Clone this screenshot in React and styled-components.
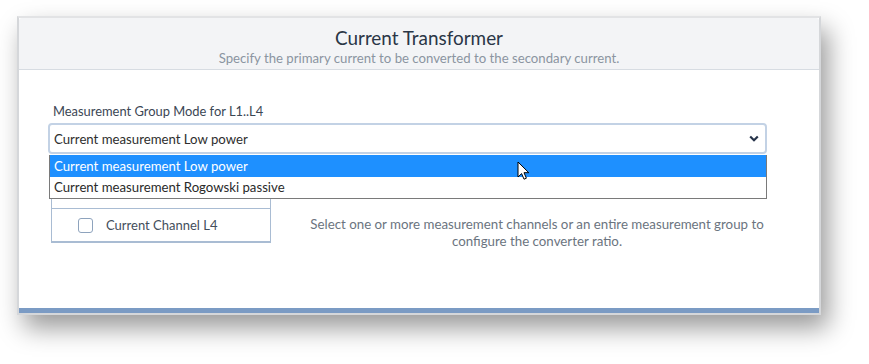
import React from "react";
import styled, { createGlobalStyle } from "styled-components";

const Global = createGlobalStyle`
  html, body { margin: 0; padding: 0; background: #ffffff; }
  body { font-family: "Lato", "Open Sans", sans-serif; }
`;

const Page = styled.div`
  position: relative;
  width: 869px;
  height: 364px;
  overflow: hidden;
  padding: 16px 0 0 17px;
  box-sizing: border-box;
`;

const Frame = styled.div`
  width: 800px;
  border: 2px solid #d5d7da;
  border-top-color: #e2e3e5;
  box-shadow: 7px 13px 24px rgba(0, 0, 0, 0.4);
`;

const Card = styled.div`
  background: #ffffff;
  display: flex;
  flex-direction: column;
`;

const Header = styled.div`
  background: #f3f4f6;
  border-bottom: 1px solid #d7dce2;
  padding: 8px 0 3px;
  text-align: center;
  border-radius: 3px 3px 0 0;
`;

const Title = styled.div`
  font-size: 18.9px;
  line-height: 24px;
  color: #2a3646;
`;

const Subtitle = styled.div`
  font-size: 13.2px;
  line-height: 16px;
  color: #8b95a1;
`;

const Body = styled.div`
  padding: 33px 52px 58px 29px;
`;

const Label = styled.div`
  font-size: 12.9px;
  line-height: 16px;
  color: #3b4654;
  padding-left: 5px;
  margin-bottom: 4px;
`;

const SelectWrap = styled.div`
  position: relative;
`;

const SelectBox = styled.div`
  height: 31px;
  box-sizing: border-box;
  border: 2px solid #c3d2e5;
  border-radius: 4px;
  display: flex;
  align-items: center;
  justify-content: space-between;
  padding: 0 6px 0 4px;
  font-size: 13.2px;
  color: #2e2e2e;
`;

const DropList = styled.div`
  position: absolute;
  top: calc(100% + 1px);
  left: 1px;
  right: 0;
  border: 1px solid #7a7a7a;
  border-top: none;
  background: #ffffff;
  z-index: 5;
`;

const Option = styled.div`
  height: ${(p) => (p.$active ? "22px" : "21px")};
  line-height: ${(p) => (p.$active ? "22px" : "21px")};
  padding-left: 4px;
  font-size: 13.2px;
  background: ${(p) => (p.$active ? "#1e90ff" : "#ffffff")};
  color: ${(p) => (p.$active ? "#ffffff" : "#2a2a2a")};
`;

const Row = styled.div`
  display: grid;
  grid-template-columns: 220px 1fr;
  column-gap: 36px;
  align-items: start;
  margin-top: 20px;
  padding-left: 3px;
`;

const ChannelList = styled.div`
  border: 1px solid #a9bcd3;
  border-bottom-width: 2px;
  padding-top: 33px;
`;

const Channel = styled.div`
  height: 33px;
  box-sizing: border-box;
  display: flex;
  align-items: center;
  padding-left: 26px;
  gap: 13px;
  font-size: 13px;
  color: #434e5b;
  border-top: 1px solid #a9bcd3;
`;

const Check = styled.span`
  width: 15px;
  height: 15px;
  box-sizing: border-box;
  border: 1.5px solid #8ea3bd;
  border-radius: 3px;
  background: #fff;
  flex: none;
`;

const Hint = styled.div`
  margin-top: 42px;
  text-align: center;
  font-size: 13.3px;
  line-height: 17px;
  color: #6b7480;
`;

const BottomBar = styled.div`
  height: 5px;
  background: #7b9bc4;
`;

const Cursor = styled.svg`
  position: absolute;
  left: 517px;
  top: 161px;
  z-index: 10;
`;

export default function App() {
  return (
    <>
      <Global />
      <Page>
        <Frame>
          <Card>
            <Header>
              <Title>Current Transformer</Title>
              <Subtitle>
                Specify the primary current to be converted to the secondary current.
              </Subtitle>
            </Header>
            <Body>
              <Label>Measurement Group Mode for L1..L4</Label>
              <SelectWrap>
                <SelectBox>
                  <span>Current measurement Low power</span>
                  <svg width="10" height="7" viewBox="0 0 10 7">
                    <polyline
                      points="1.2,1.5 5,5.2 8.8,1.5"
                      fill="none"
                      stroke="#26334a"
                      strokeWidth="2.2"
                    />
                  </svg>
                </SelectBox>
                <DropList>
                  <Option $active>Current measurement Low power</Option>
                  <Option>Current measurement Rogowski passive</Option>
                </DropList>
              </SelectWrap>
              <Row>
                <ChannelList>
                  <Channel>
                    <Check />
                    Current Channel L4
                  </Channel>
                </ChannelList>
                <Hint>
                  Select one or more measurement channels or an entire measurement group to configure the converter ratio.
                </Hint>
              </Row>
            </Body>
            <BottomBar />
          </Card>
        </Frame>
        <Cursor width="13" height="20" viewBox="0 0 13 20">
          <path
            d="M1 1 L1 16 L4.6 12.6 L7 18.2 L9.4 17.2 L7 11.7 L11.8 11.7 Z"
            fill="#ffffff"
            stroke="#000000"
            strokeWidth="1"
            strokeLinejoin="round"
          />
        </Cursor>
      </Page>
    </>
  );
}
